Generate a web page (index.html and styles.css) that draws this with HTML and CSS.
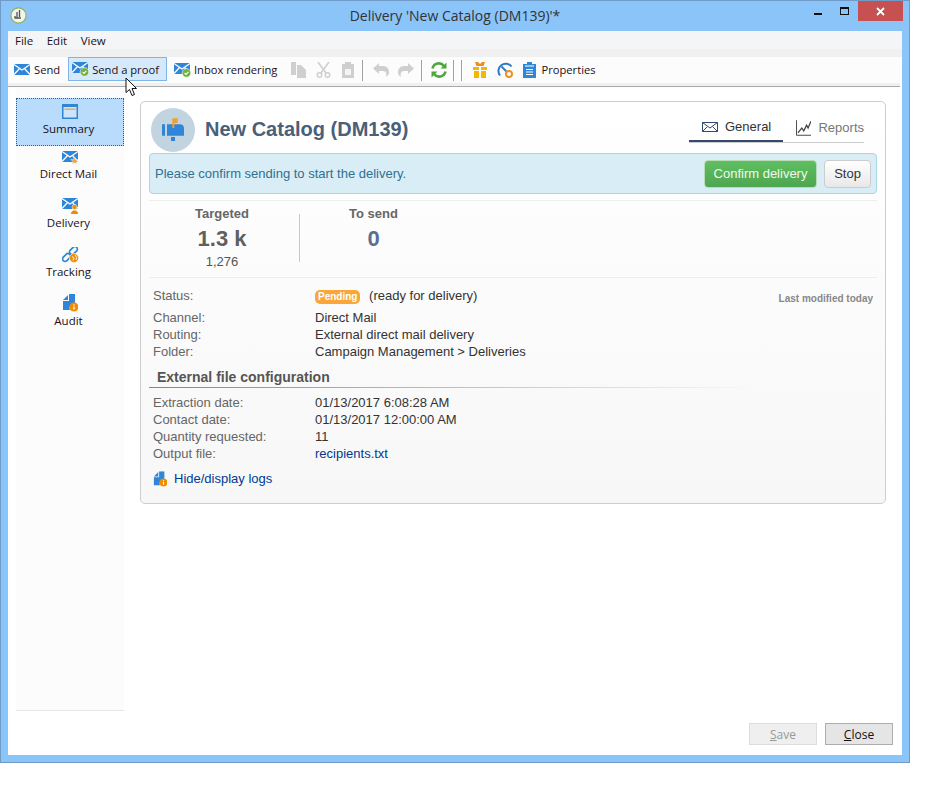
FILE: index.html
```html
<!DOCTYPE html>
<html lang="en">
<head>
<meta charset="UTF-8">
<meta name="viewport" content="width=device-width, initial-scale=1.0">
<title>Delivery 'New Catalog (DM139)'*</title>
<link rel="stylesheet" href="styles.css">
</head>
<body>

<svg class="defs" width="0" height="0">
  <symbol id="env" viewBox="0 0 16 11">
    <path d="M0 0H16V11H0Z" fill="#2f86d8"/>
    <path d="M0 .5L8 6L16 .5M0 10.5L5.6 4.5M16 10.5L10.4 4.5" fill="none" stroke="#fff" stroke-width="1.2"/>
  </symbol>
  <symbol id="doclog" viewBox="0 0 16 18">
    <path d="M1 6L6 1V6ZM7 0H13V9A5 5 0 0 0 8 16H1V7H7Z" fill="#2f86d8"/>
    <circle cx="12" cy="13" r="4.5" fill="#f08c00"/>
    <path d="M12 10.5V11.5M12 12.5V15.5" stroke="#fff" stroke-width="1.4"/>
  </symbol>
</svg>

<div class="window">
  <div class="titlebar">
    <svg class="app-icon" width="17" height="17" viewBox="0 0 17 17">
      <circle cx="8.5" cy="8.5" r="7.6" fill="#f4f4ee" stroke="#8db650" stroke-width="1.2"/>
      <path d="M9.5 3V10M7 5V11M5 9V11H11" fill="none" stroke="#555" stroke-width="1.3"/>
    </svg>
    <div class="title">Delivery 'New Catalog (DM139)'*</div>
    <div class="win-min"></div>
    <div class="win-max"></div>
    <div class="win-close">
      <svg width="9" height="9" viewBox="0 0 9 9"><path d="M1 1L8 8M8 1L1 8" stroke="#fff" stroke-width="1.8"/></svg>
    </div>
  </div>

  <div class="client">
    <div class="menubar">
      <span>File</span><span>Edit</span><span>View</span>
    </div>
    <div class="toolbar-top"></div>
    <div class="toolbar">
      <div class="tool tool-send">
        <svg width="16" height="11"><use href="#env"/></svg>
        Send
      </div>
      <div class="tool tool-active">
        <svg width="18" height="15" viewBox="0 0 18 15">
          <use href="#env" width="16" height="11"/>
          <circle cx="12.5" cy="10" r="4.3" fill="#6db33f" stroke="#fff" stroke-width=".6"/>
          <path d="M10.6 10L12 11.4L14.4 8.8" fill="none" stroke="#fff" stroke-width="1.1"/>
        </svg>
        Send a proof
      </div>
      <div class="tool tool-inbox">
        <svg width="18" height="15" viewBox="0 0 18 15">
          <use href="#env" width="16" height="11"/>
          <circle cx="12.5" cy="10" r="4.3" fill="#6db33f" stroke="#fff" stroke-width=".6"/>
          <path d="M10.6 10L12 11.4L14.4 8.8" fill="none" stroke="#fff" stroke-width="1.1"/>
        </svg>
        Inbox rendering
      </div>
      <svg class="ticon ti-copy" width="15" height="16" viewBox="0 0 15 16">
        <path d="M0 0H5V13H0ZM6 3H10L15 8V16H6Z" fill="#cfcfcf"/>
      </svg>
      <svg class="ticon ti-cut" width="15" height="16" viewBox="0 0 15 16">
        <path d="M2 0L10 11M13 0L5 11" stroke="#cfcfcf" stroke-width="1.6"/>
        <circle cx="3.5" cy="13" r="2.3" fill="none" stroke="#cfcfcf" stroke-width="1.4"/>
        <circle cx="11.5" cy="13" r="2.3" fill="none" stroke="#cfcfcf" stroke-width="1.4"/>
      </svg>
      <svg class="ticon ti-paste" width="14" height="16" viewBox="0 0 14 16">
        <path d="M1 2H4V0H10V2H13V16H1Z" fill="#cfcfcf"/>
        <path d="M4 7H10V13H4Z" fill="#f4f4f4"/>
      </svg>
      <div class="sep sep-a"></div>
      <svg class="ticon ti-undo" width="16" height="14" viewBox="0 0 16 14">
        <path d="M6 0V3H10C14 3 16 6 16 9C16 11 15 13 13 14C14 11 13 8 10 8H6V11L0 5.5Z" fill="#cfcfcf"/>
      </svg>
      <svg class="ticon ti-redo" width="16" height="14" viewBox="0 0 16 14">
        <path d="M10 0V3H6C2 3 0 6 0 9C0 11 1 13 3 14C2 11 3 8 6 8H10V11L16 5.5Z" fill="#cfcfcf"/>
      </svg>
      <div class="sep sep-b"></div>
      <svg class="ticon ti-refresh" width="16" height="16" viewBox="0 0 16 16">
        <path d="M1.5 6.5A6.5 6.5 0 0 1 13 4M14.5 9.5A6.5 6.5 0 0 1 3 12" fill="none" stroke="#4da83c" stroke-width="2.6"/>
        <path d="M15.5 .5V6.5H9.5ZM.5 15.5V9.5H6.5Z" fill="#4da83c"/>
      </svg>
      <div class="sep sep-c"></div>
      <div class="sep sep-d"></div>
      <svg class="ticon ti-gift" width="14" height="16" viewBox="0 0 14 16">
        <path d="M2 0H5L7 2L9 0H12L10.5 4H3.5Z" fill="#ee8c1e"/>
        <path d="M0 5H6V8H0ZM8 5H14V8H8ZM1 9H6V16H1ZM8 9H13V16H8Z" fill="#f5b800"/>
      </svg>
      <svg class="ticon ti-gauge" width="16" height="16" viewBox="0 0 16 16">
        <path d="M3 13.5A7 7 0 0 1 14.5 4.5" fill="none" stroke="#2f78c4" stroke-width="2"/>
        <path d="M4.5 4.5L9.5 9.5" stroke="#2f78c4" stroke-width="1.8"/>
        <circle cx="12" cy="12" r="3" fill="#fff" stroke="#f0901e" stroke-width="2"/>
      </svg>
      <svg class="ticon ti-clip" width="13" height="16" viewBox="0 0 13 16">
        <path d="M0 2H4V0H9V2H13V16H0Z" fill="#2f86d8"/>
        <path d="M2 4H11M3 7.5H10M3 10H10M3 12.5H10" stroke="#fff" stroke-width="1.1"/>
      </svg>
      <div class="tool tool-props">Properties</div>
    </div>
    <div class="toolbar-bottom"></div>

    <div class="main">
      <div class="sidebar">
        <div class="side-item side-active">
          <svg width="16" height="15" viewBox="0 0 16 15">
            <path d="M0 0H16V15H0Z" fill="#2f86d8"/>
            <path d="M1.5 3H14.5V13.5H1.5Z" fill="#cfe4f8"/>
            <path d="M2.5 4.5H13.5V6H2.5Z" fill="#eeaa55"/>
          </svg>
          <span>Summary</span>
        </div>
        <div class="side-item">
          <svg width="17" height="14" viewBox="0 0 17 14">
            <use href="#env" width="16" height="11"/>
            <path d="M12.5 6L13.5 8.6H16.2L14 10.3L14.8 13.5L12.5 11.7L10.2 13.5L11 10.3L8.8 8.6H11.5Z" fill="#f0a030" stroke="#fff" stroke-width=".5"/>
          </svg>
          <span>Direct Mail</span>
        </div>
        <div class="side-item">
          <svg width="17" height="16" viewBox="0 0 17 16">
            <use href="#env" width="16" height="11"/>
            <circle cx="12.5" cy="9" r="2.5" fill="#ee8c00" stroke="#fff" stroke-width=".5"/>
            <path d="M9 16V14.5L11 12.5H14L16 14.5V16Z" fill="#ee8c00"/>
          </svg>
          <span>Delivery</span>
        </div>
        <div class="side-item">
          <svg width="17" height="16" viewBox="0 0 17 16">
            <rect x="7" y="1" width="9" height="5" rx="2.5" transform="rotate(-45 11.5 3.5)" fill="none" stroke="#2f86d8" stroke-width="1.7"/>
            <rect x="0" y="8" width="9" height="5" rx="2.5" transform="rotate(-45 4.5 10.5)" fill="none" stroke="#2f86d8" stroke-width="1.7"/>
            <circle cx="12" cy="11" r="4.5" fill="#ee8c00" stroke="#fff" stroke-width=".6"/>
            <path d="M10 9.5L12 11L11 13.5M13 8L14.5 10.5L14 13" fill="none" stroke="#fff" stroke-width=".9"/>
          </svg>
          <span>Tracking</span>
        </div>
        <div class="side-item">
          <svg width="16" height="18"><use href="#doclog"/></svg>
          <span>Audit</span>
        </div>
      </div>

      <div class="content">
        <div class="card">
          <div class="card-head">
            <div class="avatar">
              <svg width="24" height="24" viewBox="0 0 24 24">
                <path d="M1 6.3H4V17.7H1ZM6 6.3H9V17.7H6Z" fill="#2f86d8"/>
                <path d="M9 6.3H19C22 6.3 23 8.5 23 10.5V17.7H9Z" fill="#2f86d8"/>
                <path d="M11.3 .3H16.7V5H13.3V10H11.3Z" fill="#f0a030"/>
                <path d="M10 19H14V23H10Z" fill="#2f86d8"/>
              </svg>
            </div>
            <h1 class="card-title">New Catalog (DM139)</h1>
            <div class="tabs">
              <div class="tab tab-on">
                <svg width="16" height="10" viewBox="0 0 16 10">
                  <path d="M.5 .5H15.5V9.5H.5ZM.5 .5L8 6L15.5 .5M.5 9.5L5.5 4.5M15.5 9.5L10.5 4.5" fill="none" stroke="#34496e"/>
                </svg>
                General
              </div>
              <div class="tab tab-off">
                <svg width="16" height="16" viewBox="0 0 16 16">
                  <path d="M.5 0V15.5H16" fill="none" stroke="#444"/>
                  <path d="M2 13L6 8L8 11L11 5L12.5 8L15.5 1" fill="none" stroke="#444" stroke-width="1.3"/>
                </svg>
                Reports
              </div>
            </div>
          </div>

          <div class="alert">
            <span class="alert-text">Please confirm sending to start the delivery.</span>
            <button class="btn btn-confirm" type="button">Confirm delivery</button>
            <button class="btn btn-stop" type="button">Stop</button>
          </div>

          <div class="stats">
            <div class="stat stat-first">
              <div class="stat-label">Targeted</div>
              <div class="stat-num">1.3 k</div>
              <div class="stat-sub">1,276</div>
            </div>
            <div class="stat-div"></div>
            <div class="stat">
              <div class="stat-label">To send</div>
              <div class="stat-num stat-blue">0</div>
            </div>
          </div>

          <div class="details">
            <div class="status-row">
              <div class="lbl">Status:</div>
              <div class="val"><span class="badge">Pending</span> (ready for delivery)</div>
              <div class="modified">Last modified today</div>
            </div>
            <div class="rows">
              <div class="lbl">Channel:</div><div class="val">Direct Mail</div>
              <div class="lbl">Routing:</div><div class="val">External direct mail delivery</div>
              <div class="lbl">Folder:</div><div class="val">Campaign Management &gt; Deliveries</div>
            </div>
            <h2 class="section-title">External file configuration</h2>
            <div class="rows">
              <div class="lbl">Extraction date:</div><div class="val">01/13/2017 6:08:28 AM</div>
              <div class="lbl">Contact date:</div><div class="val">01/13/2017 12:00:00 AM</div>
              <div class="lbl">Quantity requested:</div><div class="val">11</div>
              <div class="lbl">Output file:</div><div class="val"><a class="link">recipients.txt</a></div>
            </div>
            <div class="logs">
              <svg width="14" height="16" viewBox="0 0 16 18"><use href="#doclog"/></svg>
              <a class="link">Hide/display logs</a>
            </div>
          </div>
        </div>
      </div>
    </div>

    <div class="footer">
      <button class="foot-btn foot-off" type="button"><u>S</u>ave</button>
      <button class="foot-btn" type="button"><u>C</u>lose</button>
    </div>
  </div>
</div>

<svg class="cursor" width="14" height="20" viewBox="0 0 14 20">
  <path d="M1 1V15.5L4.5 12.5L7 18.5L9.5 17.5L7 11.5H11.5Z" fill="#fff" stroke="#111" stroke-width="1"/>
</svg>

</body>
</html>
```

FILE: styles.css
```css
html, body {
  margin: 0;
  background: #fff;
}
body {
  position: relative;
  width: 935px;
  height: 787px;
  overflow: hidden;
  font-family: "Open Sans", "Noto Sans", sans-serif;
  font-size: 11.2px;
  color: #1a1020;
}
.defs {
  position: absolute;
}

/* window frame */
.window {
  width: 908px;
  height: 761px;
  border: 1px solid #6f9bc6;
  background: #8ac4f9;
  display: flex;
  flex-direction: column;
}
.titlebar {
  height: 30px;
  flex: none;
  display: flex;
  align-items: flex-start;
  position: relative;
}
.app-icon {
  margin: 6px 0 0 9px;
}
.title {
  position: absolute;
  left: 0;
  right: 0;
  top: 6px;
  text-align: center;
  font-size: 14px;
  line-height: 18px;
  color: #333;
}
.win-min {
  width: 8px;
  height: 2px;
  background: #111;
  position: absolute;
  left: 813px;
  top: 12px;
}
.win-max {
  width: 7px;
  height: 5px;
  border: 1px solid #111;
  border-top-width: 2px;
  position: absolute;
  left: 839px;
  top: 6px;
}
.win-close {
  width: 45px;
  height: 20px;
  background: #c75050;
  position: absolute;
  left: 857px;
  top: 0;
  display: flex;
  align-items: center;
  justify-content: center;
}
.client {
  flex: 1;
  margin: 0 7px 7px;
  background: #fff;
  display: flex;
  flex-direction: column;
  min-height: 0;
}

/* menu and toolbar */
.menubar {
  height: 18px;
  flex: none;
  box-sizing: border-box;
  padding: 1px 0 0 7px;
  background: #f4f5f7;
  display: flex;
  gap: 13.5px;
  line-height: 18px;
  font-size: 11.5px;
}
.toolbar-top {
  height: 8px;
  flex: none;
  background: #f0f0f0;
}
.toolbar {
  height: 26px;
  flex: none;
  margin-right: 2px;
  background: #fcfcfc;
  display: flex;
  align-items: center;
}
.toolbar-bottom {
  height: 3px;
  flex: none;
  margin-right: 2px;
  background: #f0f0f0;
  border-bottom: 1px solid #a9a9a9;
}
.tool {
  display: flex;
  align-items: center;
  gap: 4px;
  line-height: 16px;
  white-space: nowrap;
}
.tool-send {
  margin-left: 6px;
}
.tool-send svg {
  margin-top: -2px;
}
.tool-active {
  height: 24px;
  box-sizing: border-box;
  margin-left: 8px;
  padding: 1px 7px 0 3px;
  align-self: flex-start;
  background: #d6e9fb;
  border: 1px solid #7db6ea;
  gap: 2px;
}
.tool-inbox {
  margin-left: 7px;
  gap: 2px;
}
.ticon {
  flex: none;
}
.ti-copy { margin-left: 14px; }
.ti-cut { margin-left: 10px; }
.ti-paste { margin-left: 10px; }
.sep {
  width: 1px;
  height: 21px;
  background: #a0a0a0;
  flex: none;
}
.sep-a { margin-left: 7px; }
.ti-undo { margin-left: 10px; }
.ti-redo { margin-left: 9px; }
.sep-b { margin-left: 7px; }
.ti-refresh { margin-left: 9px; }
.sep-c { margin-left: 6px; }
.sep-d { margin-left: 7px; }
.ti-gift { margin-left: 11px; }
.ti-gauge { margin-left: 10px; }
.ti-clip { margin-left: 10px; }
.tool-props { margin-left: 5px; }

/* sidebar */
.main {
  flex: 1;
  display: flex;
  min-height: 0;
}
.sidebar {
  width: 108px;
  height: 624px;
  flex: none;
  margin-left: 8px;
  padding-top: 11px;
  box-sizing: border-box;
  background: #fcfcfc;
  border-bottom: 1px solid #e4e8ec;
  font-size: 11.5px;
}
.side-item {
  height: 49px;
  display: flex;
  flex-direction: column;
  align-items: center;
  justify-content: flex-end;
  padding-bottom: 14px;
  box-sizing: border-box;
}
.side-item svg {
  margin-bottom: 1px;
}
.side-item span {
  line-height: 16px;
  margin-right: 3px;
}
.side-active {
  height: 48px;
  padding-bottom: 8px;
  margin-bottom: 1px;
  background: #b9dcfc;
  border: 1px dotted #2a5c90;
}
.side-active svg {
  margin-bottom: 2px;
}

/* card */
.content {
  flex: 1;
  min-width: 0;
  padding: 14px 16px 0;
}
.card {
  height: 403px;
  box-sizing: border-box;
  padding: 6px 8px 0;
  border: 1px solid #cdcdcd;
  border-radius: 5px;
  background: linear-gradient(#fff, #f7f7f7);
  font-family: "Liberation Sans", Arial, sans-serif;
  font-size: 13px;
  color: #333;
}
.card-head {
  height: 45px;
  display: flex;
  align-items: flex-start;
}
.avatar {
  width: 44px;
  height: 44px;
  margin-left: 2px;
  border-radius: 50%;
  background: #c3d4e1;
  box-shadow: 0 1px 0 #fff;
  display: flex;
  align-items: center;
  justify-content: center;
  flex: none;
}
.card-title {
  margin: 8px 0 0 10px;
  font-size: 20px;
  line-height: 26px;
  color: #4a5f78;
}
.tabs {
  margin-left: auto;
  margin-right: 13px;
  margin-top: 5px;
  display: flex;
  border-bottom: 1px solid #ccc;
}
.tab {
  height: 29px;
  display: flex;
  align-items: center;
  gap: 7px;
  box-sizing: border-box;
}
.tab-on {
  width: 94px;
  padding-left: 13px;
  border-bottom: 2px solid #34496e;
  margin-bottom: -1px;
  color: #333;
}
.tab-off {
  padding-left: 13px;
  width: 81px;
  color: #777;
}
.alert {
  height: 41px;
  box-sizing: border-box;
  display: flex;
  align-items: center;
  padding: 0 5px;
  background: #d9edf7;
  border: 1px solid #a9d6e4;
  border-radius: 4px;
}
.alert-text {
  color: #31708f;
  flex: 1;
}
.btn {
  height: 28px;
  font-family: inherit;
  font-size: 13px;
  border-radius: 4px;
  padding: 0;
}
.btn-confirm {
  width: 113px;
  color: #f0f8ee;
  background: linear-gradient(#5fbf61, #4ea650);
  border: 1px solid #b8dcb5;
}
.btn-stop {
  width: 47px;
  margin-left: 7px;
  color: #333;
  background: linear-gradient(#fff, #e8e8e8);
  border: 1px solid #ccc;
}
.stats {
  height: 78px;
  margin-top: 6px;
  box-sizing: border-box;
  display: flex;
  align-items: flex-start;
  border-top: 1px solid #eee;
  border-bottom: 1px solid #eee;
  padding-top: 5px;
}
.stat {
  text-align: center;
  width: 147px;
}
.stat-first {
  width: 146px;
  margin-right: 4px;
}
.stat-div {
  width: 1px;
  height: 48px;
  margin-top: 8px;
  background: #c8c8c8;
}
.stat-label {
  font-weight: bold;
  color: #666;
  line-height: 15px;
}
.stat-num {
  font-size: 22px;
  font-weight: bold;
  color: #5f5f5f;
  line-height: 26px;
  margin-top: 5px;
}
.stat-blue {
  color: #5a6f90;
}
.stat-sub {
  color: #555;
  line-height: 15px;
  margin-top: 2px;
}

/* details */
.details {
  padding: 9px 4px 0;
}
.status-row {
  display: grid;
  grid-template-columns: 162px 1fr auto;
  align-items: center;
  height: 17px;
  margin-bottom: 5px;
}
.rows {
  display: grid;
  grid-template-columns: 162px 1fr;
  line-height: 17px;
}
.lbl {
  color: #666;
}
.val {
  color: #333;
}
.badge {
  display: inline-block;
  background: #f9a73a;
  color: #fff;
  font-size: 10px;
  font-weight: bold;
  line-height: 14px;
  padding: 0 3px;
  border-radius: 5px;
  margin-right: 5px;
}
.modified {
  margin-top: 6px;
  font-size: 10px;
  font-weight: bold;
  color: #888;
}
.section-title {
  margin: 9px 0 6px -4px;
  padding: 0 0 2px 8px;
  font-size: 14px;
  line-height: 16px;
  color: #555;
  border-bottom: 1px solid;
  border-image: linear-gradient(90deg, #4a90e2, transparent 84%) 1;
}
.link {
  color: #003a92;
}
.logs {
  display: flex;
  align-items: center;
  gap: 7px;
  margin-top: 9px;
  line-height: 16px;
}

/* footer buttons */
.footer {
  flex: none;
  height: 32px;
  display: flex;
  justify-content: flex-end;
  gap: 8px;
  padding-right: 9px;
}
.foot-btn {
  width: 68px;
  height: 22px;
  padding: 0;
  font-family: inherit;
  font-size: 12px;
  color: #111;
  background: #e5e5e5;
  border: 1px solid #adadad;
}
.foot-off {
  color: #999;
  background: #efefef;
  border-color: #ddd;
}

/* mouse pointer over the toolbar */
.cursor {
  position: absolute;
  left: 125px;
  top: 77px;
}
```
